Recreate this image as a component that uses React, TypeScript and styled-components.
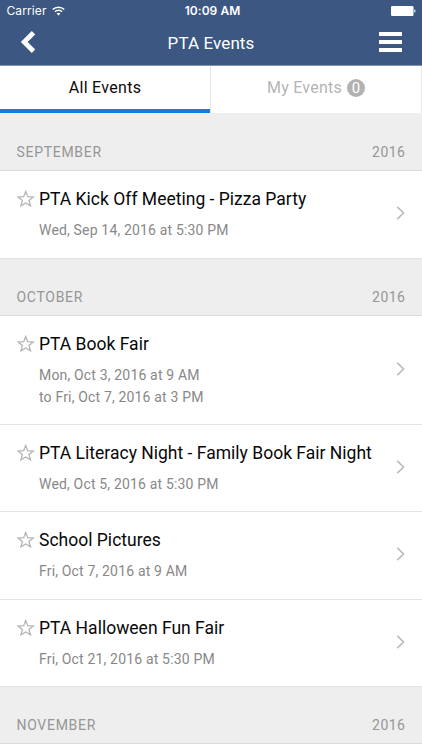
import React from "react";
import styled, { createGlobalStyle } from "styled-components";

const GlobalStyle = createGlobalStyle`
  * { box-sizing: border-box; }
  html, body { margin: 0; background: #fff; }
  body { font-family: Roboto, "Liberation Sans", sans-serif; overflow: hidden; }
  h1, h2, h3, p { margin: 0; font-weight: 400; }
  button { border: 0; padding: 0; background: none; font: inherit; color: inherit; display: flex; }
`;

const Screen = styled.div`
  width: 422px;
  height: 750px;
  overflow: hidden;
  background: #fff;
`;

const Header = styled.header`
  height: 66px;
  background: #3b5782;
  border-bottom: 1px solid #8593ad;
  color: #fff;
`;

const StatusBar = styled.div`
  height: 22px;
  display: grid;
  grid-template-columns: 1fr auto 1fr;
  align-items: center;
  padding: 0 6px;
  font: 12px/22px Inter, sans-serif;
`;

const Carrier = styled.div`
  display: flex;
  align-items: center;
  gap: 5px;
  padding-left: 0.5px;
  letter-spacing: 0.1px;
`;

const Clock = styled.div`
  padding-left: 3px;
  font-weight: 600;
  letter-spacing: 0.05px;
`;

const Battery = styled.svg`
  justify-self: end;
`;

const NavBar = styled.div`
  height: 43px;
  display: grid;
  grid-template-columns: 1fr auto 1fr;
  align-items: center;
  padding: 0 20px;
`;

const NavTitle = styled.h1`
  font-size: 17px;
  line-height: 43px;
  letter-spacing: 0.1px;
`;

const BackButton = styled.button`
  padding-bottom: 3px;
`;

const MenuButton = styled.button`
  justify-self: end;
  padding-bottom: 3px;
`;

const Tabs = styled.nav`
  display: flex;
  height: 47px;
`;

const Tab = styled.button<{ $active?: boolean }>`
  flex: 1;
  align-items: center;
  justify-content: center;
  gap: 5px;
  box-shadow: inset 0 -4px ${(p) => (p.$active ? "#127be4" : "#fff")};
  padding-bottom: 4px;
  border-right: 1px solid #e6e6e6;
  font-size: 16px;
  letter-spacing: ${(p) => (p.$active ? 0.3 : 0.25)}px;
  color: ${(p) => (p.$active ? "#0a0a0a" : "#b4b4b4")};
`;

const Badge = styled.span`
  width: 18px;
  height: 18px;
  border-radius: 50%;
  background: #b2b2b2;
  color: #fff;
  font-size: 15px;
  line-height: 18px;
  letter-spacing: 0;
  text-align: center;
`;

const MonthBar = styled.div<{ $height: number }>`
  display: flex;
  justify-content: space-between;
  align-items: flex-end;
  height: ${(p) => p.$height}px;
  padding: 0 16.5px 8px;
  background: #eee;
  border-bottom: 1px solid #dcdcdc;
  color: #969696;
  font-size: 14px;
  line-height: 20px;
`;

const MonthName = styled.h2`
  font-size: 14px;
  letter-spacing: 0.7px;
`;

const Year = styled.span`
  letter-spacing: 0.5px;
`;

const EventRow = styled.article<{ $height: number }>`
  display: flex;
  align-items: center;
  height: ${(p) => p.$height}px;
  padding: 0 17px 0 16.5px;
  border-bottom: 1px solid #e4e4e4;
`;

const StarButton = styled.button`
  align-self: flex-start;
  width: 22.5px;
  padding-top: 18.5px;
  flex: none;
`;

const Details = styled.div`
  flex: 1;
  align-self: flex-start;
  padding-top: 16px;
  white-space: nowrap;
`;

const EventTitle = styled.h3`
  font-size: 17.5px;
  line-height: 24px;
  letter-spacing: 0.01px;
  color: #080808;
`;

const EventDate = styled.p`
  margin-top: 9px;
  font-size: 14px;
  line-height: 21.5px;
  letter-spacing: 0.17px;
  color: #888;
`;

const ChevronIcon = styled.svg`
  flex: none;
  margin-bottom: 3px;
`;

const Star = () => (
  <svg width="18" height="18" viewBox="0 0 18 18" fill="none" stroke="#b5b5b5" strokeWidth="1.3">
    <path d="M8.7 1.5l2 5.2 5.6.3-4.3 3.5 1.5 5.4-4.8-3-4.8 3 1.5-5.4L1.1 7l5.6-.3z" />
  </svg>
);

const Chevron = () => (
  <ChevronIcon width="9" height="14" viewBox="0 0 9 14" fill="none" stroke="#bdbdbd" strokeWidth="1.7">
    <path d="M1.3.9L7.5 7l-6.2 6.1" />
  </ChevronIcon>
);

interface EventItem {
  title: string;
  dates: string[];
  height: number;
}

interface Month {
  name: string;
  height: number;
  events: EventItem[];
}

const months: Month[] = [
  {
    name: "SEPTEMBER",
    height: 58,
    events: [{ title: "PTA Kick Off Meeting - Pizza Party", dates: ["Wed, Sep 14, 2016 at 5:30 PM"], height: 88 }],
  },
  {
    name: "OCTOBER",
    height: 57,
    events: [
      { title: "PTA Book Fair", dates: ["Mon, Oct 3, 2016 at 9 AM", "to Fri, Oct 7, 2016 at 3 PM"], height: 109 },
      { title: "PTA Literacy Night - Family Book Fair Night", dates: ["Wed, Oct 5, 2016 at 5:30 PM"], height: 87 },
      { title: "School Pictures", dates: ["Fri, Oct 7, 2016 at 9 AM"], height: 88 },
      { title: "PTA Halloween Fun Fair", dates: ["Fri, Oct 21, 2016 at 5:30 PM"], height: 87 },
    ],
  },
  { name: "NOVEMBER", height: 57, events: [] },
];

export default function App() {
  return (
    <Screen>
      <GlobalStyle />
      <Header>
        <StatusBar>
          <Carrier>
            Carrier
            <svg width="13" height="10" viewBox="0 0 13 10" fill="none" stroke="#fff" strokeWidth="1.5">
              <path d="M.7 3.5a8.3 8.3 0 0 1 11.6 0M2.9 5.8a5.1 5.1 0 0 1 7.2 0" />
              <path d="M4.6 7.6a2.7 2.7 0 0 1 3.8 0L6.5 9.6z" fill="#fff" stroke="none" />
            </svg>
          </Carrier>
          <Clock>10:09 AM</Clock>
          <Battery width="25" height="10" viewBox="0 0 25 10" fill="#fff">
            <rect width="22.5" height="10" rx="1.2" />
            <path d="M23.3 3.3c1.7.6 1.7 2.8 0 3.4z" />
          </Battery>
        </StatusBar>
        <NavBar>
          <BackButton aria-label="Back">
            <svg width="17" height="24" viewBox="0 0 17 24" fill="none" stroke="#fff" strokeWidth="4.8">
              <path d="M13.5 2.7L4.2 12l9.3 9.3" strokeLinejoin="miter" />
            </svg>
          </BackButton>
          <NavTitle>PTA Events</NavTitle>
          <MenuButton aria-label="Menu">
            <svg width="24" height="20" viewBox="0 0 24 20" fill="#fff">
              <rect x="1" width="23" height="4" rx=".6" />
              <rect x="1" y="8" width="23" height="4" rx=".6" />
              <rect x="1" y="16" width="23" height="4" rx=".6" />
            </svg>
          </MenuButton>
        </NavBar>
      </Header>
      <Tabs>
        <Tab $active>All Events</Tab>
        <Tab>
          My Events <Badge>0</Badge>
        </Tab>
      </Tabs>
      {months.map((month) => (
        <section key={month.name}>
          <MonthBar $height={month.height}>
            <MonthName>{month.name}</MonthName>
            <Year>2016</Year>
          </MonthBar>
          {month.events.map((event) => (
            <EventRow key={event.title} $height={event.height}>
              <StarButton aria-label="Favorite">
                <Star />
              </StarButton>
              <Details>
                <EventTitle>{event.title}</EventTitle>
                <EventDate>
                  {event.dates.map((line, i) => (
                    <React.Fragment key={line}>
                      {i > 0 && <br />}
                      {line}
                    </React.Fragment>
                  ))}
                </EventDate>
              </Details>
              <Chevron />
            </EventRow>
          ))}
        </section>
      ))}
    </Screen>
  );
}
